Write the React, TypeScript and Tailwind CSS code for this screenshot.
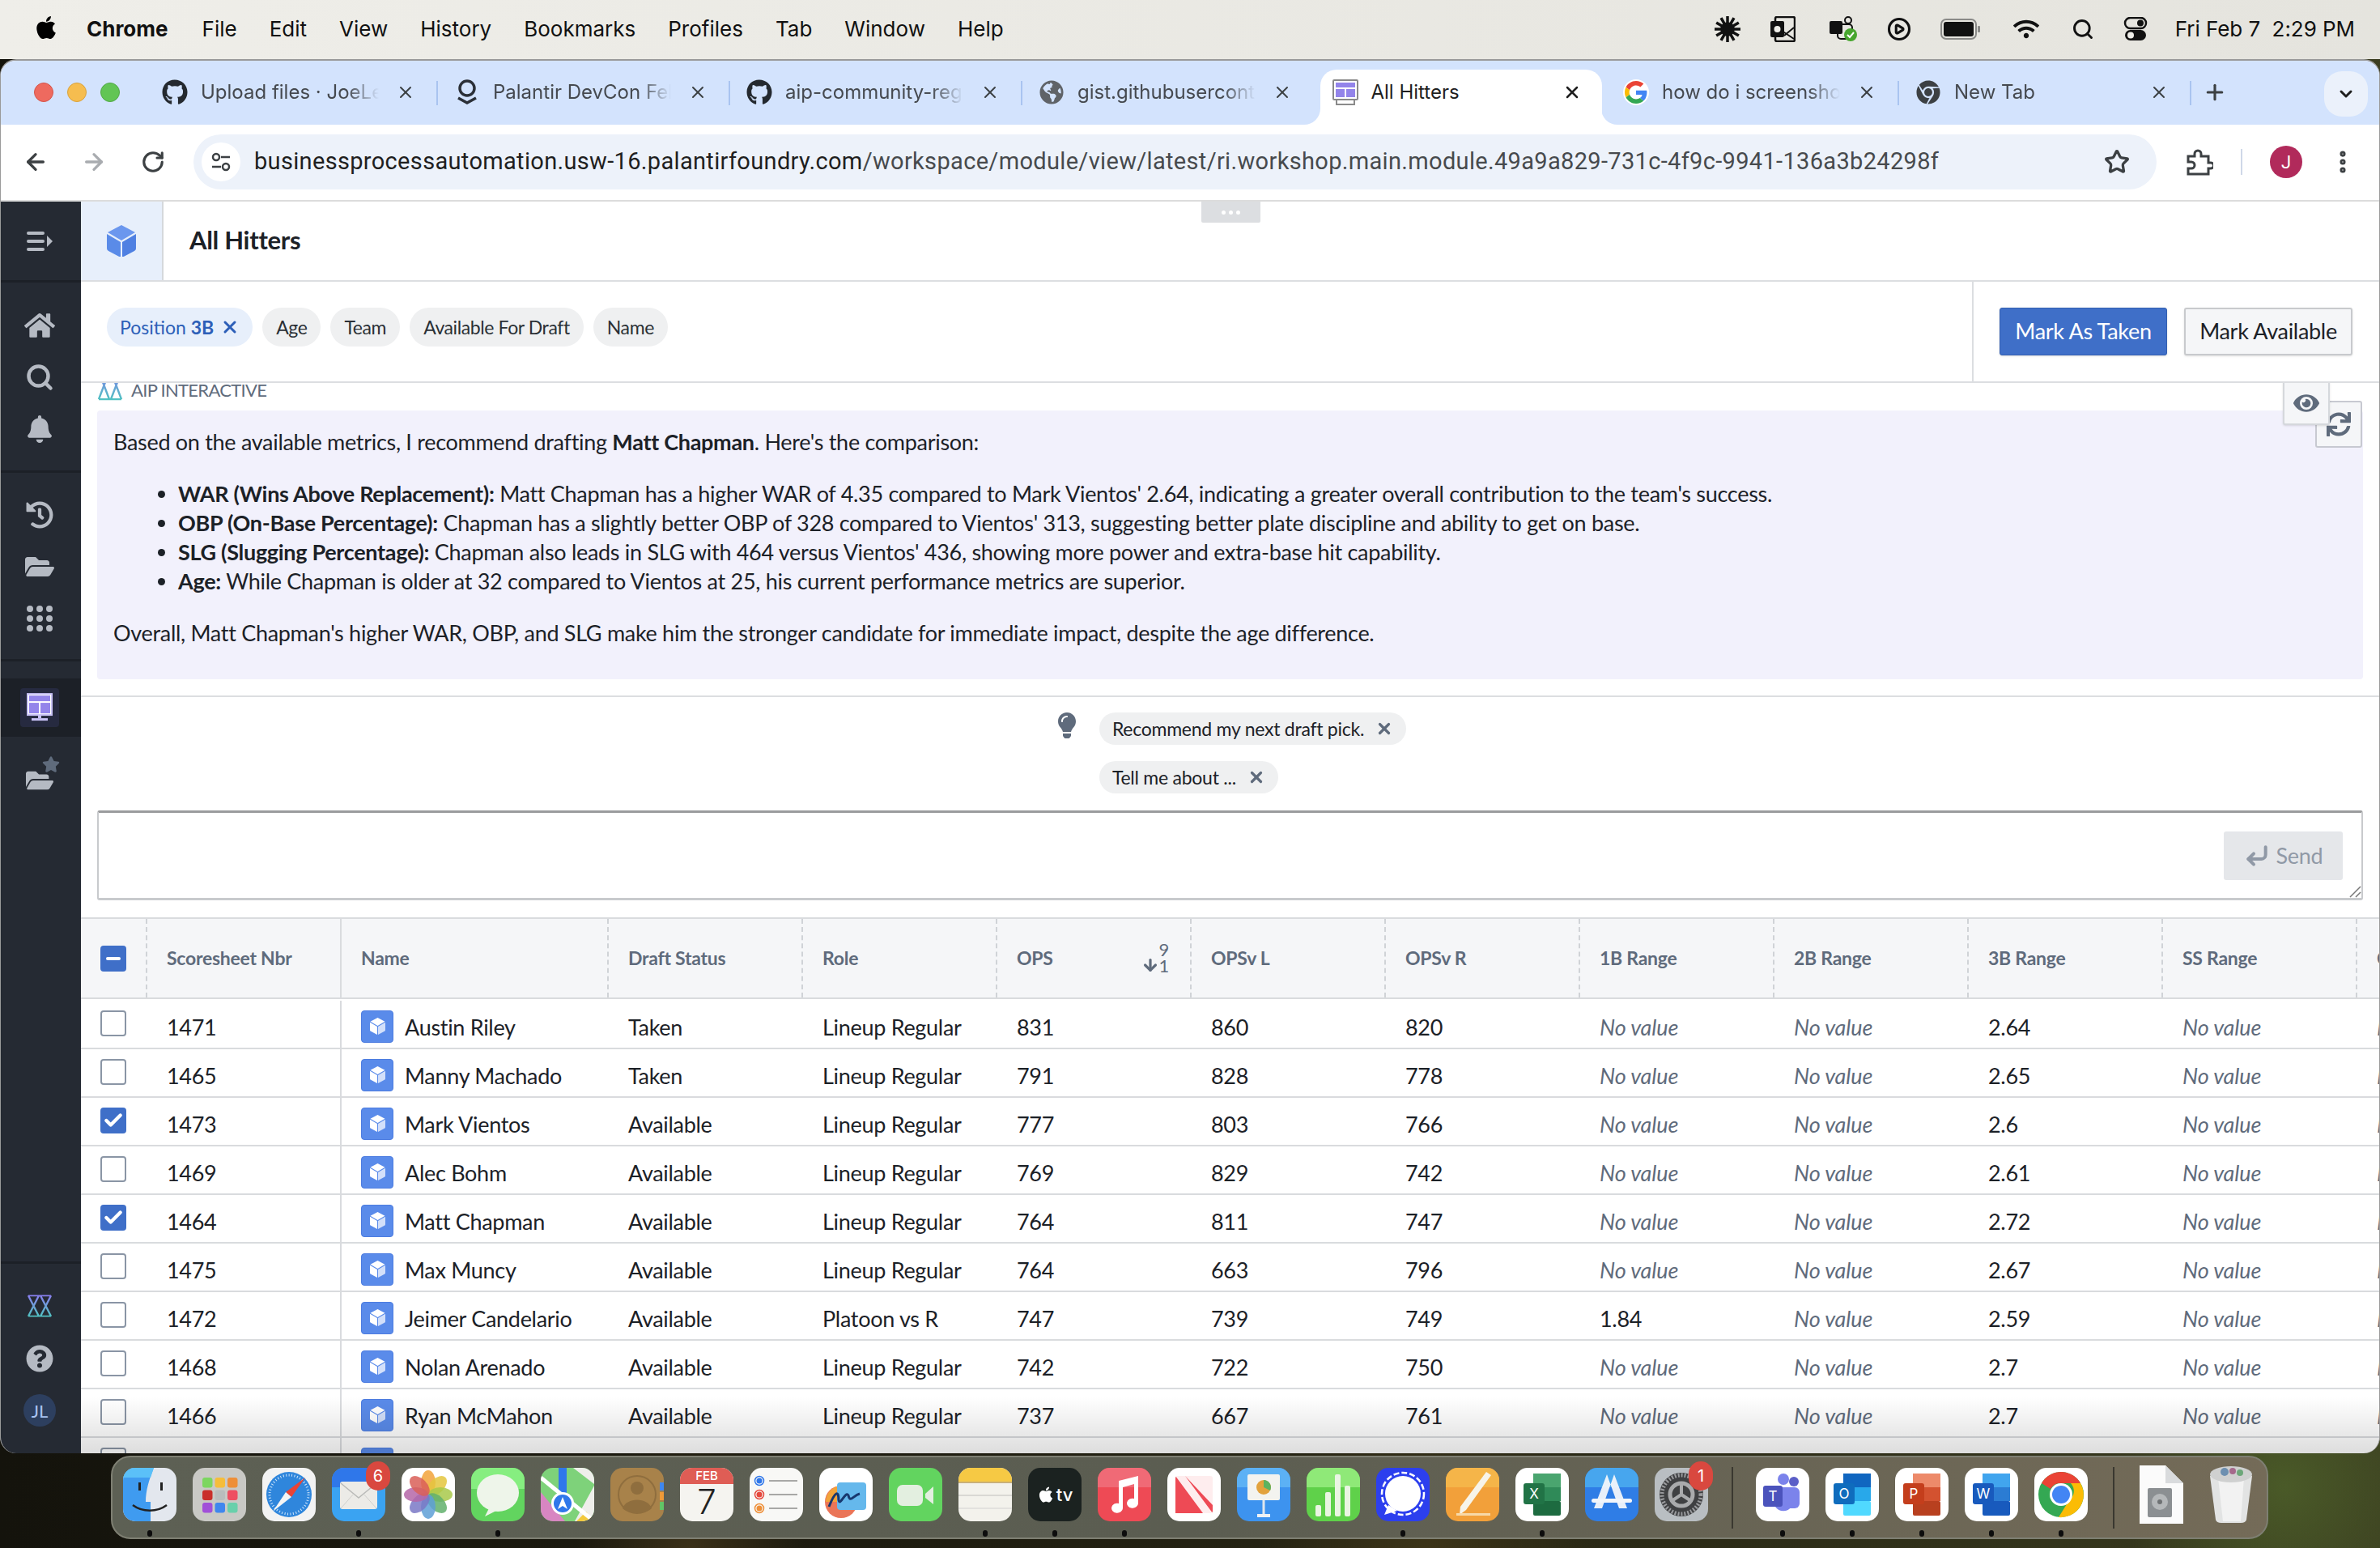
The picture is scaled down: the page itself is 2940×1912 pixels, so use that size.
import React from "react";
import { ArrowLeft, ArrowRight, RotateCw, Star, MoreVertical, X, Plus, ChevronDown, Search, CirclePlay, Check, Minus, CornerDownLeft, ArrowDown } from "lucide-react";
import { FaApple, FaGithub, FaHome, FaBell, FaHistory, FaFolderOpen, FaQuestionCircle, FaEye, FaSync, FaLightbulb, FaWifi, FaStar, FaChrome, FaGlobeAmericas } from "react-icons/fa";

const Cube = ({ s = 36, top = "#6b97ee", left = "#5a8be8", right = "#4f80e2" }: { s?: number; top?: string; left?: string; right?: string }) => (
  <svg width={s} height={s * 1.11} viewBox="0 0 36 40">
    <path d="M18 0 35 9 18 19 1 9Z" fill={top} />
    <path d="M0 11 17 21V40L2 32Q0 31 0 29Z" fill={left} />
    <path d="M36 11 19 21V40L34 32Q36 31 36 29Z" fill={right} />
  </svg>
);

const AipLogo = ({ w = 32, h = 28, id = "aipg" }: { w?: number; h?: number; id?: string }) => (
  <svg width={w} height={h} viewBox="0 0 32 42" fill="none" strokeWidth="2.500" preserveAspectRatio="none">
    <defs>
      <linearGradient id={id} gradientUnits="userSpaceOnUse" x1="0" y1="0" x2="0" y2="42">
        <stop offset="0" stopColor="#8b7cf0" />
        <stop offset="1" stopColor="#4fc4c0" />
      </linearGradient>
    </defs>
    <path d="M2 2H30M2 40H30M2 2 15 40M15 2 2 40M17 2 30 40M30 2 17 40" stroke={`url(#${id})`} />
  </svg>
);

const Bars = () => (
  <svg width="32" height="24" viewBox="0 0 32 24" fill="#b5bac3">
    <rect x="0" y="0" width="22" height="4" rx="2" />
    <rect x="0" y="10" width="22" height="4" rx="2" />
    <rect x="0" y="20" width="22" height="4" rx="2" />
    <path d="M25 5 32 12 25 19Z" />
  </svg>
);

const ModuleIcon = ({ w = 32 }: { w?: number }) => (
  <svg width={w} height={w * 1.1} viewBox="0 0 32 35">
    <rect x="1" y="1" width="30" height="26" fill="#fff" stroke="#c8c2f5" strokeWidth="2" />
    <rect x="3" y="3" width="26" height="7" fill="#9384ea" />
    <rect x="3" y="12" width="12" height="13" fill="#9384ea" />
    <rect x="17" y="12" width="12" height="13" fill="#9384ea" />
    <rect x="14" y="27" width="4" height="4" fill="#c8c2f5" />
    <rect x="6" y="31" width="20" height="3" fill="#c8c2f5" />
  </svg>
);

const ModuleFav = () => (
  <svg width="32" height="32" viewBox="0 0 32 32">
    <rect x="1" y="1" width="30" height="24" rx="1" fill="#fff" stroke="#8a8a8a" strokeWidth="2" />
    <rect x="4" y="4" width="24" height="6" fill="#9384ea" />
    <rect x="4" y="12" width="11" height="10" fill="#9384ea" />
    <rect x="17" y="12" width="11" height="10" fill="#9384ea" />
    <path d="M5 26V31H27V26" fill="none" stroke="#8a8a8a" strokeWidth="2" />
  </svg>
);

const GridDots = () => (
  <svg width="32" height="32" viewBox="0 0 32 32" fill="#b5bac3">
    {[4, 16, 28].flatMap((y) => [4, 16, 28].map((x) => <circle key={x + "-" + y} cx={x} cy={y} r="4" />))}
  </svg>
);

const GoogleG = () => (
  <svg width="28" height="28" viewBox="0 0 48 48">
    <path fill="#EA4335" d="M24 9.5c3.5 0 6.700 1.300 9.200 3.400l6.800-6.800C35.900 2.400 30.300 0 24 0 14.600 0 6.500 5.400 2.600 13.200l7.900 6.100C12.400 13.700 17.700 9.500 24 9.500z" />
    <path fill="#4285F4" d="M47 24.500c0-1.600-.1-3.100-.4-4.500H24v9h12.900c-.6 3-2.200 5.500-4.700 7.200l7.600 5.900C44.300 37.900 47 31.800 47 24.500z" />
    <path fill="#FBBC05" d="M10.500 28.700c-.5-1.400-.8-3-.8-4.700s.3-3.300.8-4.700l-7.900-6.100C.9 16.500 0 20.100 0 24s.9 7.500 2.600 10.800l7.900-6.100z" />
    <path fill="#34A853" d="M24 48c6.500 0 11.900-2.100 15.800-5.900l-7.600-5.900c-2.100 1.400-4.900 2.300-8.200 2.300-6.300 0-11.600-4.200-13.500-9.800l-7.900 6.100C6.500 42.600 14.600 48 24 48z" />
  </svg>
);

const PalantirFav = () => (
  <svg width="28" height="32" viewBox="0 0 28 32" fill="none" stroke="#2b3038" strokeWidth="3.500">
    <circle cx="14" cy="11" r="9" />
    <path d="M3 23 14 29 25 23" />
  </svg>
);

const Tab = ({ icon, text, sep = true }: { icon: React.ReactNode; text: string; sep?: boolean }) => (
  <div className="w-[361px] h-[56px] flex items-center pl-[20px] relative shrink-0">
    <div className="w-[32px] flex justify-center shrink-0">{icon}</div>
    <div className="ml-[16px] w-[220px] whitespace-nowrap overflow-hidden text-[#45494f] text-[24px] font-['Inter',sans-serif] [mask-image:linear-gradient(to_right,black_82%,transparent)]">{text}</div>
    <X size={24} className="ml-[21px] text-[#3c4043]" strokeWidth={2} />
    {sep && <div className="absolute right-0 top-[14px] w-[2px] h-[30px] bg-[#a9c4f0]" />}
  </div>
);

const Chip = ({ children }: { children: React.ReactNode }) => (
  <div className="h-[48px] px-[17px] flex items-center rounded-[24px] bg-[#eff0f1] text-[#2b3036] text-[23px] tracking-[-0.4px]">{children}</div>
);

const cols = ["w-[240px]", "w-[330px]", "w-[240px]", "w-[240px]", "w-[240px]", "w-[240px]", "w-[240px]", "w-[240px]", "w-[240px]", "w-[240px]", "w-[240px]", "w-[100px]"];
const heads = ["Scoresheet Nbr", "Name", "Draft Status", "Role", "OPS", "OPSv L", "OPSv R", "1B Range", "2B Range", "3B Range", "SS Range", "C Range"];

const NV = "No value";
const rows: { id: string; name: string; st: string; role: string; v: string[]; c: boolean }[] = [
  { id: "1471", name: "Austin Riley", st: "Taken", role: "Lineup Regular", v: ["831", "860", "820", NV, NV, "2.64", NV, NV], c: false },
  { id: "1465", name: "Manny Machado", st: "Taken", role: "Lineup Regular", v: ["791", "828", "778", NV, NV, "2.65", NV, NV], c: false },
  { id: "1473", name: "Mark Vientos", st: "Available", role: "Lineup Regular", v: ["777", "803", "766", NV, NV, "2.6", NV, NV], c: true },
  { id: "1469", name: "Alec Bohm", st: "Available", role: "Lineup Regular", v: ["769", "829", "742", NV, NV, "2.61", NV, NV], c: false },
  { id: "1464", name: "Matt Chapman", st: "Available", role: "Lineup Regular", v: ["764", "811", "747", NV, NV, "2.72", NV, NV], c: true },
  { id: "1475", name: "Max Muncy", st: "Available", role: "Lineup Regular", v: ["764", "663", "796", NV, NV, "2.67", NV, NV], c: false },
  { id: "1472", name: "Jeimer Candelario", st: "Available", role: "Platoon vs R", v: ["747", "739", "749", "1.84", NV, "2.59", NV, NV], c: false },
  { id: "1468", name: "Nolan Arenado", st: "Available", role: "Lineup Regular", v: ["742", "722", "750", NV, NV, "2.7", NV, NV], c: false },
  { id: "1466", name: "Ryan McMahon", st: "Available", role: "Lineup Regular", v: ["737", "667", "761", NV, NV, "2.7", NV, NV], c: false },
];

const Box = ({ checked }: { checked: boolean }) =>
  checked ? (
    <div className="w-[32px] h-[32px] rounded-[4px] bg-[#3f6fc8] flex items-center justify-center"><Check size={26} strokeWidth={4} className="text-white" /></div>
  ) : (
    <div className="w-[32px] h-[32px] rounded-[4px] bg-white border-[2px] border-[#8a95a5]" />
  );

const RowIcon = () => (
  <div className="w-[40px] h-[40px] rounded-[4px] bg-[#5a8bea] border border-[#4c7ce0] flex items-center justify-center shrink-0">
    <Cube s={19} top="#ffffff" left="#ffffff" right="#d3e0fa" />
  </div>
);

const Row = ({ r, first }: { r: (typeof rows)[number]; first: boolean }) => (
  <div className={first ? "flex h-[62px] pt-[2px] border-b-[2px] border-[#d9dbde] text-[27px] tracking-[-0.3px] leading-[36px] text-[#1c2127] shrink-0" : "flex h-[60px] border-b-[2px] border-[#d9dbde] text-[27px] tracking-[-0.3px] leading-[36px] text-[#1c2127] shrink-0"}>
    <div className="w-[82px] shrink-0 pl-[24px] pt-[12px]"><Box checked={r.c} /></div>
    <div className="w-[240px] shrink-0 pl-[24px] pt-[15px] border-r-[2px] border-[#d9dbde]">{r.id}</div>
    <div className="w-[330px] shrink-0 pl-[24px] flex items-start pt-[12px]"><RowIcon /><span className="ml-[14px] mt-[3px] whitespace-nowrap">{r.name}</span></div>
    <div className="w-[240px] shrink-0 pl-[24px] pt-[15px]">{r.st}</div>
    <div className="w-[240px] shrink-0 pl-[24px] pt-[15px]">{r.role}</div>
    {r.v.map((v, i) => (
      <div key={i} className={v === NV ? "w-[240px] shrink-0 pl-[24px] pt-[15px] italic tracking-[-0.1px] text-[#5f6b7c]" : "w-[240px] shrink-0 pl-[24px] pt-[15px]"}>{v}</div>
    ))}
  </div>
);

const Sq = ({ children, bg }: { children?: React.ReactNode; bg?: string }) => (
  <svg width="66" height="66" viewBox="0 0 66 66">
    <defs>
      <clipPath id="sq"><rect width="66" height="66" rx="15" /></clipPath>
    </defs>
    <g clipPath="url(#sq)">
      <rect width="66" height="66" fill={bg || "#fff"} />
      {children}
    </g>
  </svg>
);

const Finder = () => (
  <Sq bg="#e3e7ee">
    <path d="M0 0H38C32 15 28 28 28 42H34V66H0Z" fill="#3f9bf0" />
    <path d="M0 0H38L34 12H0Z" fill="#5bc0f8" />
    <rect x="19" y="18" width="3" height="10" fill="#222" />
    <rect x="46" y="18" width="3" height="10" fill="#222" />
    <path d="M12 46C24 55 42 55 54 46" stroke="#222" strokeWidth="2.500" fill="none" />
  </Sq>
);
const Launchpad = () => {
  const c = ["#7cd660", "#f5bd3a", "#ee8f38", "#c92f2a", "#b9bdbd", "#ee4f62", "#a150d8", "#3f87ee", "#69d0ab"];
  return (
    <Sq bg="#c9c9c5">
      {c.map((col, i) => (
        <rect key={i} x={12 + (i % 3) * 15.500} y={12 + Math.floor(i / 3) * 15.500} width="12.500" height="12.500" rx="3" fill={col} />
      ))}
    </Sq>
  );
};
const Safari = () => (
  <Sq bg="#f3f3f3">
    <circle cx="33" cy="33" r="28" fill="#2f86dc" />
    <circle cx="33" cy="33" r="24" fill="none" stroke="#cfe6fb" strokeWidth="3" strokeDasharray="1 2.500" />
    <path d="M53 12 29 30 36 36Z" fill="#ea4335" />
    <path d="M13 54 29 30 36 36Z" fill="#f5f5f5" />
  </Sq>
);
const Mail = () => (
  <Sq bg="#3aa3f2">
    <rect width="66" height="24" fill="#2f77ea" />
    <rect x="10" y="17" width="46" height="34" rx="3" fill="#ecebe7" />
    <path d="M11 19 33 37 55 19" fill="none" stroke="#b9bab8" strokeWidth="1.500" />
    <path d="M11 50 27 32M55 50 39 32" fill="none" stroke="#cfcfcc" strokeWidth="1" />
  </Sq>
);
const Photos = () => {
  const c = ["#f2a33a", "#e4c63e", "#a8c94a", "#62b06c", "#5e9fd6", "#7a78c6", "#b566a8", "#d95f58"];
  return (
    <Sq bg="#fff">
      {c.map((col, i) => (
        <ellipse key={i} cx="33" cy="18" rx="9" ry="15" fill={col} opacity=".85" transform={`rotate(${i * 45} 33 33)`} />
      ))}
    </Sq>
  );
};
const Messages = () => (
  <Sq bg="#62d45f">
    <rect width="66" height="26" fill="#86ee80" />
    <ellipse cx="33" cy="31" rx="26" ry="23" fill="#eef5ea" />
    <path d="M22 50 17 60 31 53Z" fill="#eef5ea" />
  </Sq>
);
const Maps = () => (
  <Sq bg="#7ed27a">
    <path d="M0 30 30 66H0Z" fill="#d886c2" />
    <path d="M40 0H66V20Z" fill="#eeeeea" />
    <path d="M22 0H32V40H22Z" fill="#2f77ea" />
    <path d="M66 22V66H42Z" fill="#eeeeea" />
    <path d="M44 66 56 54 66 66Z" fill="#f3c93c" />
    <path d="M0 12 66 66" stroke="#fff" strokeWidth="5" />
    <circle cx="27" cy="44" r="14" fill="#fff" />
    <circle cx="27" cy="44" r="11" fill="#2f77ea" />
    <path d="M27 36 33 51 27 47 21 51Z" fill="#fff" />
  </Sq>
);
const Contacts = () => (
  <Sq bg="#a8824a">
    <circle cx="33" cy="33" r="23" fill="none" stroke="#8f6e3e" strokeWidth="2" />
    <circle cx="33" cy="25" r="8" fill="#8f6e3e" />
    <path d="M15 50C20 36 46 36 51 50 42 58 24 58 15 50Z" fill="#8f6e3e" />
    <rect x="61" y="18" width="5" height="10" fill="#3f87ee" />
    <rect x="61" y="30" width="5" height="10" fill="#ee9a38" />
    <rect x="61" y="42" width="5" height="10" fill="#62c466" />
  </Sq>
);
const CalendarI = () => (
  <div className="relative w-[66px] h-[66px] rounded-[15px] bg-[#f5f4f0] overflow-hidden">
    <div className="h-[20px] bg-[#df5d55] text-white text-[15px] leading-[20px] text-center font-['Inter',sans-serif] font-medium">FEB</div>
    <div className="text-[42px] leading-[44px] text-center text-[#222] font-['Inter',sans-serif] font-light">7</div>
  </div>
);
const Reminders = () => (
  <Sq bg="#f8f8f6">
    {[{ y: 16, c: "#2f77ea" }, { y: 33, c: "#e5483d" }, { y: 50, c: "#ee8f38" }].map((o) => (
      <g key={o.y}>
        <circle cx="12" cy={o.y} r="5.500" fill="none" stroke={o.c} strokeWidth="1.500" />
        <circle cx="12" cy={o.y} r="3.500" fill={o.c} />
        <rect x="24" y={o.y - 1} width="35" height="2" fill="#a8a8a6" />
      </g>
    ))}
  </Sq>
);
const Freeform = () => (
  <Sq bg="#fff">
    <circle cx="27" cy="42" r="20" fill="#ea7558" />
    <path d="M8 42A20 20 0 0 1 27 22V42Z" fill="#f2a33a" />
    <rect x="22" y="18" width="36" height="34" rx="4" fill="#65b8ec" />
    <path d="M12 48C20 28 24 28 24 40 26 48 32 28 36 34 38 44 42 34 50 32" fill="none" stroke="#17376e" strokeWidth="3" />
  </Sq>
);
const Facetime = () => (
  <Sq bg="#62d45f">
    <rect x="10" y="21" width="32" height="26" rx="7" fill="#e3efe0" />
    <path d="M45 32 55 23V45L45 37Z" fill="#e3efe0" />
  </Sq>
);
const Notes = () => (
  <Sq bg="#f3f2ec">
    <rect width="66" height="17" fill="#f6c944" />
    <rect y="17" width="66" height="2" fill="#c9b078" />
    <rect y="33" width="66" height="2" fill="#d9d8d4" />
    <rect y="49" width="66" height="2" fill="#e3e2de" />
  </Sq>
);
const TV = () => (
  <div className="w-[66px] h-[66px] rounded-[15px] bg-[#1b2220] flex items-center justify-center text-white gap-[2px]">
    <FaApple size={22} />
    <span className="text-[22px] font-['Inter',sans-serif] font-medium leading-none">tv</span>
  </div>
);
const Music = () => (
  <Sq bg="#ee4a55">
    <rect width="66" height="24" fill="#f06a76" />
    <path d="M26 16 50 10V44A7 6 0 1 1 45 38V20L31 24V50A7 6 0 1 1 26 44Z" fill="#fff" />
  </Sq>
);
const News = () => (
  <Sq bg="#fff">
    <rect x="10" y="10" width="46" height="46" rx="3" fill="#ee4a55" />
    <path d="M10 10H22L56 56H44ZM22 10 56 46V10Z" fill="#fff" opacity="0.9" />
    <path d="M10 22 36 56H10Z" fill="#ee4a55" />
  </Sq>
);
const Keynote = () => (
  <Sq bg="#3d93ef">
    <rect width="66" height="24" fill="#5cb1f5" />
    <rect x="13" y="8" width="40" height="32" rx="2" fill="#f3f3ef" />
    <circle cx="33" cy="24" r="9" fill="#e2a23c" />
    <path d="M33 24V15A9 9 0 0 1 41 28Z" fill="#5bb35f" />
    <rect x="31.500" y="40" width="3" height="18" fill="#dfe7ee" />
    <rect x="25" y="57" width="16" height="4" fill="#eef2f5" />
  </Sq>
);
const Numbers = () => (
  <Sq bg="#5fd14a">
    <rect width="66" height="24" fill="#8fe978" />
    <rect x="11" y="46" width="7" height="14" rx="2" fill="#eaf5e3" />
    <rect x="23" y="30" width="7" height="30" rx="2" fill="#eaf5e3" />
    <rect x="35" y="8" width="7" height="52" rx="2" fill="#eaf5e3" />
    <rect x="47" y="22" width="7" height="38" rx="2" fill="#eaf5e3" />
  </Sq>
);
const Signal = () => (
  <Sq bg="#2c3fee">
    <ellipse cx="33" cy="32" rx="22" ry="22" fill="#fff" />
    <circle cx="33" cy="32" r="26" fill="none" stroke="#fff" strokeWidth="2.500" strokeDasharray="7 3" />
    <path d="M15 46 10 58 26 53Z" fill="#fff" />
  </Sq>
);
const Pages = () => (
  <Sq bg="#f2a03a">
    <rect width="66" height="24" fill="#f5b549" />
    <path d="M50 5 56 9 25 52 17 58 18 48Z" fill="#f7f4ea" />
    <rect x="13" y="56" width="42" height="3" fill="#f7d9a8" />
  </Sq>
);
const Office = ({ a, b, c, d, l }: { a: string; b: string; c: string; d: string; l: string }) => (
  <Sq bg="#fff">
    <rect x="22" y="7" width="34" height="17" fill={a} />
    <rect x="22" y="24" width="34" height="17" fill={b} />
    <rect x="22" y="41" width="34" height="18" rx="2" fill={c} />
    <rect x="10" y="19" width="26" height="26" rx="3" fill={d} />
    <text x="23" y="38" textAnchor="middle" fontSize="17" fill="#fff" fontFamily="Inter, sans-serif">{l}</text>
  </Sq>
);
const AppStore = () => (
  <Sq bg="#2f7de6">
    <rect width="66" height="24" fill="#47a6ee" />
    <path d="M36 8 27 8 42 50 52 50ZM27 8 36 8 21 50 11 50Z" fill="#f2f5fa" opacity=".95" />
    <rect x="8" y="38" width="50" height="5" rx="2.500" fill="#f2f5fa" />
  </Sq>
);
const SettingsI = () => (
  <Sq bg="#b9bec2">
    <circle cx="33" cy="33" r="27" fill="#3f4042" />
    <circle cx="33" cy="33" r="24" fill="none" stroke="#9a9b9e" strokeWidth="5" strokeDasharray="2 2" />
    <circle cx="33" cy="33" r="14" fill="none" stroke="#a9aaac" strokeWidth="5" />
    <path d="M33 19V33L21 41M33 33 45 41" stroke="#a9aaac" strokeWidth="4" fill="none" />
  </Sq>
);
const Teams = () => (
  <Sq bg="#fff">
    <circle cx="47" cy="17" r="6" fill="#5b5fc7" />
    <circle cx="34" cy="14" r="7" fill="#7b83eb" />
    <rect x="24" y="24" width="30" height="26" rx="6" fill="#7b83eb" />
    <path d="M24 24H44V48A12 12 0 0 1 24 48Z" fill="#7b83eb" />
    <rect x="9" y="22" width="24" height="26" rx="3" fill="#4b53bc" />
    <text x="21" y="41" textAnchor="middle" fontSize="17" fill="#fff" fontFamily="Inter, sans-serif">T</text>
  </Sq>
);
const Chrome = () => (
  <Sq bg="#fff">
    <circle cx="33" cy="33" r="28" fill="#34a853" />
    <path d="M33 5A28 28 0 0 1 57 19H33A14 14 0 0 0 20 26L9 19A28 28 0 0 1 33 5Z" fill="#ea4335" />
    <path d="M57 19A28 28 0 0 1 30 61L43 40A14 14 0 0 0 45 19Z" fill="#fbbc05" />
    <circle cx="33" cy="33" r="14" fill="#fff" />
    <circle cx="33" cy="33" r="11" fill="#4285f4" />
  </Sq>
);
const FileI = () => (
  <svg width="54" height="72" viewBox="0 0 54 72" className="-mt-[1px]">
    <path d="M0 0H32L54 22V72H0Z" fill="#fbfbfb" />
    <path d="M32 0 54 22H32Z" fill="#d9dbdd" />
    <rect x="10" y="28" width="30" height="36" rx="2" fill="#8b8f92" />
    <circle cx="25" cy="45" r="10" fill="#b5b8ba" />
    <circle cx="25" cy="45" r="3" fill="#6f7274" />
  </svg>
);
const Trash = () => (
  <svg width="56" height="74" viewBox="0 0 56 74">
    <path d="M2 14H54L47 68Q46 72 40 72H16Q10 72 9 68Z" fill="#e2e3e3" />
    <path d="M12 16 44 16 40 70H18Z" fill="#f2f2f2" />
    <ellipse cx="28" cy="12" rx="26" ry="10" fill="#cfd0d0" />
    <circle cx="20" cy="9" r="5" fill="#6d8fb0" />
    <circle cx="30" cy="8" r="4" fill="#a56a8c" />
    <circle cx="39" cy="10" r="4" fill="#6da77a" />
  </svg>
);

const dockA: { el: React.ReactNode; dot?: boolean; badge?: string }[] = [
  { el: <Finder />, dot: true },
  { el: <Launchpad /> },
  { el: <Safari /> },
  { el: <Mail />, dot: true, badge: "6" },
  { el: <Photos /> },
  { el: <Messages />, dot: true },
  { el: <Maps /> },
  { el: <Contacts /> },
  { el: <CalendarI /> },
  { el: <Reminders /> },
  { el: <Freeform /> },
  { el: <Facetime /> },
  { el: <Notes />, dot: true },
  { el: <TV />, dot: true },
  { el: <Music />, dot: true },
  { el: <News /> },
  { el: <Keynote /> },
  { el: <Numbers /> },
  { el: <Signal />, dot: true },
  { el: <Pages /> },
  { el: <Office a="#4aa56f" b="#2f8a58" c="#1d6b40" d="#217346" l="X" />, dot: true },
  { el: <AppStore /> },
  { el: <SettingsI />, badge: "1" },
];
const dockB = [
  <Teams />,
  <Office a="#1066c0" b="#28a8ea" c="#50d9ff" d="#0f6cbd" l="O" />,
  <Office a="#ed8a6a" b="#d35230" c="#b8401f" d="#c43e1c" l="P" />,
  <Office a="#41a5ee" b="#2b7cd3" c="#185abd" d="#185abd" l="W" />,
  <Chrome />,
];

const DockItem = ({ children, dot, badge }: { children: React.ReactNode; dot?: boolean; badge?: string }) => (
  <div className="w-[66px] flex flex-col items-center relative shrink-0">
    <div className="w-[66px] h-[66px] flex items-center justify-center">{children}</div>
    <div className={dot ? "mt-[11px] w-[6px] h-[8px] rounded-full bg-[#0d0d0d]" : "mt-[11px] w-[6px] h-[8px]"} />
    {badge && <div className="absolute -top-[8px] -right-[6px] w-[30px] h-[36px] rounded-full bg-[#d9483f] text-white text-[20px] flex items-center justify-center font-['Inter',sans-serif]">{badge}</div>}
  </div>
);

const SideBtn = ({ children }: { children: React.ReactNode }) => <div className="h-[64px] pr-[3px] flex items-center justify-center text-[#b5bac3]">{children}</div>;

export default function App() {
  return (
    <div className="w-[2940px] h-[1912px] overflow-hidden flex flex-col bg-[radial-gradient(circle_at_96%_96%,#4a5a28,transparent_6%),radial-gradient(circle_at_29%_100%,#3a3018,transparent_5%),radial-gradient(circle_at_60%_100%,#3c3418,transparent_8%),linear-gradient(90deg,#14130c,#1f1d10_40%,#2b2a16_70%,#3a3c20)] font-['Lato',sans-serif]">
      {/* Menu bar */}
      <div className="h-[73px] shrink-0 flex items-center bg-[linear-gradient(90deg,#efeee9,#e5e4de)] pl-[41px] pr-[31px] pb-[2px] text-[26px] text-[#111] font-['Inter',sans-serif]">
        <FaApple size={32} className="text-black -mt-[3px]" />
        <div className="ml-[34px] font-bold">Chrome</div>
        <div className="ml-[42px] flex gap-[40px]">
          {["File", "Edit", "View", "History", "Bookmarks", "Profiles", "Tab", "Window", "Help"].map((m) => (
            <span key={m}>{m}</span>
          ))}
        </div>
        <div className="ml-auto flex items-center">
          <svg width="32" height="32" viewBox="0 0 32 32" stroke="#111" strokeWidth="3.500" className="mr-[36px]">
            {[0, 30, 60, 90, 120, 150].map((a) => <line key={a} x1="16" y1="0" x2="16" y2="32" transform={`rotate(${a} 16 16)`} />)}
            <circle cx="16" cy="16" r="7" fill="#111" />
          </svg>
          <svg width="32" height="32" viewBox="0 0 32 32" className="mr-[42px]">
            <rect x="7" y="1" width="24" height="30" rx="2" fill="none" stroke="#111" strokeWidth="2.500" />
            <path d="M12 16 30 28M30 14 18 24" stroke="#111" strokeWidth="2" fill="none" />
            <rect x="1" y="6" width="17" height="20" rx="2" fill="#111" />
            <circle cx="9.500" cy="16" r="4" fill="#efeee9" />
          </svg>
          <svg width="36" height="32" viewBox="0 0 36 32" className="mr-[35px]">
            <circle cx="23" cy="5" r="4" fill="none" stroke="#111" strokeWidth="2" />
            <rect x="10" y="10" width="18" height="18" rx="4" fill="none" stroke="#111" strokeWidth="2" />
            <rect x="0" y="6" width="16" height="16" rx="2" fill="#111" />
            <circle cx="26" cy="23" r="8" fill="#47a62e" />
            <path d="M22 23 25 26 30 20" stroke="#fff" strokeWidth="2" fill="none" />
          </svg>
          <CirclePlay size={30} strokeWidth={2.5} className="mr-[36px]" />
          <svg width="50" height="26" viewBox="0 0 50 26" className="mr-[40px]">
            <rect x="1" y="1" width="43" height="24" rx="6" fill="none" stroke="#8a8a88" strokeWidth="2" />
            <rect x="4" y="4" width="37" height="18" rx="3" fill="#111" />
            <rect x="46" y="9" width="3" height="8" rx="1" fill="#8a8a88" />
          </svg>
          <FaWifi size={32} className="mr-[40px]" />
          <Search size={28} strokeWidth={2.5} className="mr-[36px]" />
          <svg width="30" height="30" viewBox="0 0 30 30" className="mr-[34px]">
            <rect x="2" y="1" width="26" height="13" rx="6.500" fill="none" stroke="#111" strokeWidth="2.500" />
            <circle cx="21" cy="7.500" r="4" fill="#111" />
            <rect x="2" y="16" width="26" height="13" rx="6.500" fill="#111" />
            <circle cx="9" cy="22.500" r="4" fill="#efeee9" />
          </svg>
          <span className="whitespace-pre tracking-[-0.05px]">Fri Feb 7  2:29 PM</span>
        </div>
      </div>

      {/* Browser window */}
      <div className="h-[1722px] w-[2940px] shrink-0 rounded-[20px] overflow-hidden border-t-[2px] border-x border-[#9a9a9a] flex flex-col bg-white relative">
        {/* Tab strip */}
        <div className="h-[79px] shrink-0 bg-[#d3e3fd] flex items-start pt-[11px] relative">
          <div className="absolute left-[41px] top-[27px] flex gap-[17px]">
            <div className="w-[24px] h-[24px] rounded-full bg-[#ee6a5f] border border-[#d5544a]" />
            <div className="w-[24px] h-[24px] rounded-full bg-[#f6bd4f] border border-[#d9a23d]" />
            <div className="w-[24px] h-[24px] rounded-full bg-[#62c555] border border-[#52a847]" />
          </div>
          <div className="ml-[179px] flex">
            <Tab icon={<FaGithub size={32} className="text-[#24292f]" />} text="Upload files · JoeLemon" />
            <Tab icon={<PalantirFav />} text="Palantir DevCon Feb" />
            <Tab icon={<FaGithub size={32} className="text-[#24292f]" />} text="aip-community-registry" />
            <Tab icon={<FaGlobeAmericas size={30} className="text-[#5f6368]" />} text="gist.githubusercontent" sep={false} />
            <div className="w-[361px] h-[68px] shrink-0 flex items-start justify-center relative">
              <div className="w-[348px] h-[68px] rounded-t-[20px] bg-white flex items-center pl-[15px] pb-[12px]">
                <ModuleFav />
                <div className="ml-[16px] text-[24px] text-[#1f1f1f] font-['Inter',sans-serif] w-[236px]">All Hitters</div>
                <X size={24} className="text-[#1f1f1f]" strokeWidth={2.500} />
              </div>
              <svg width="20" height="20" viewBox="0 0 20 20" className="absolute bottom-0 -left-[13px]"><path d="M20 0V20H0A20 20 0 0 0 20 0Z" fill="#fff" /></svg>
              <svg width="20" height="20" viewBox="0 0 20 20" className="absolute bottom-0 -right-[13px]"><path d="M0 0V20H20A20 20 0 0 1 0 0Z" fill="#fff" /></svg>
            </div>
            <Tab icon={<div className="w-[32px] h-[32px] rounded-full bg-white flex items-center justify-center"><GoogleG /></div>} text="how do i screenshot" />
            <Tab icon={<FaChrome size={30} className="text-[#3c4043]" />} text="New Tab" />
            <div className="ml-[14px] h-[56px] flex items-center"><Plus size={30} className="text-[#3c4043]" strokeWidth={2.500} /></div>
          </div>
          <div className="absolute right-[14px] top-[13px] w-[54px] h-[56px] rounded-[22px] bg-[#ebf1fb] flex items-center justify-center">
            <ChevronDown size={24} strokeWidth={3} className="text-[#1f1f1f]" />
          </div>
        </div>

        {/* Toolbar */}
        <div className="h-[95px] shrink-0 flex items-center bg-white border-b-[2px] border-[#dcdcdc] pb-[1px]">
          <ArrowLeft size={32} className="ml-[27px] text-[#3c4043]" strokeWidth={2.500} />
          <ArrowRight size={32} className="ml-[40px] text-[#a9acb0]" strokeWidth={2.500} />
          <RotateCw size={30} className="ml-[42px] text-[#3c4043]" strokeWidth={2.500} />
          <div className="ml-[35px] w-[2425px] h-[68px] rounded-[34px] bg-[#edf2fa] flex items-center pl-[10px] relative">
            <div className="w-[48px] h-[48px] rounded-full bg-white flex items-center justify-center">
              <svg width="26" height="26" viewBox="0 0 26 26" fill="none" stroke="#3c4043" strokeWidth="2.500">
                <circle cx="7" cy="7" r="4" />
                <path d="M13 7H24M2 19H13" />
                <circle cx="19" cy="19" r="4" />
              </svg>
            </div>
            <div className="ml-[17px] text-[29px] tracking-[0.33px] whitespace-nowrap font-['Roboto',sans-serif] text-[#1f1f1f]">businessprocessautomation.usw-16.palantirfoundry.com<span className="text-[#474a4d]">/workspace/module/view/latest/ri.workshop.main.module.49a9a829-731c-4f9c-9941-136a3b24298f</span></div>
            <Star size={32} strokeWidth={2.500} className="absolute right-[33px] text-[#3c4043]" />
          </div>
          <svg width="34" height="34" viewBox="0 0 34 34" fill="none" stroke="#3c4043" strokeWidth="3" className="ml-[36px]">
            <path d="M3 10H11V7A4 4 0 0 1 19 7V10H28V18H31A3 3 0 0 1 31 25H28V32H3V25H7A4 4 0 0 0 7 17H3Z" />
          </svg>
          <div className="ml-[34px] w-[2px] h-[32px] bg-[#cfd8e8]" />
          <div className="ml-[34px] w-[40px] h-[40px] rounded-full bg-[#b12a5b] text-white text-[22px] flex items-center justify-center font-['Roboto',sans-serif]">J</div>
          <MoreVertical size={34} strokeWidth={3} className="ml-[33px] text-[#3c4043]" />
        </div>

        {/* App */}
        <div className="flex-1 flex min-h-0 relative">
          {/* Sidebar */}
          <div className="w-[99px] shrink-0 bg-[#252a33] flex flex-col">
            <div className="h-[100px] flex items-center justify-center border-b-[3px] border-[#1c2027] pr-[3px]"><Bars /></div>
            <div className="h-[235px] pt-[21px] border-b-[3px] border-[#1c2027]">
              <SideBtn><FaHome size={38} /></SideBtn>
              <SideBtn><Search size={36} strokeWidth={3} /></SideBtn>
              <SideBtn><FaBell size={34} /></SideBtn>
            </div>
            <div className="h-[233px] pt-[20px] border-b-[3px] border-[#1c2027]">
              <SideBtn><FaHistory size={34} /></SideBtn>
              <SideBtn><FaFolderOpen size={36} /></SideBtn>
              <SideBtn><GridDots /></SideBtn>
            </div>
            <div className="h-[744px] border-b-[3px] border-[#1c2027] pt-[21px]">
              <div className="h-[72px] pr-[3px] flex items-center justify-center bg-[#1c2027]">
                <div className="w-[48px] h-[48px] rounded-[4px] bg-[#262a40] flex items-center justify-center"><ModuleIcon w={32} /></div>
              </div>
              <div className="relative h-[64px] mt-[17px] pr-[3px] flex items-center justify-center text-[#b5bac3]">
                <FaFolderOpen size={34} className="mt-[10px]" />
                <FaStar size={22} className="absolute left-[51px] top-[6px] text-[#5f6b7c]" />
              </div>
            </div>
            <div className="flex flex-col items-center pt-[38px] pr-[3px]">
              <AipLogo w={32} h={28} id="aipside" />
              <div className="h-[64px] flex items-center justify-center text-[#b5bac3] mt-[19px]"><FaQuestionCircle size={34} /></div>
              <div className="w-[40px] h-[40px] rounded-full bg-[#2d3f5f] text-[#a9c4f2] text-[22px] flex items-center justify-center mt-[12px]">JL</div>
            </div>
          </div>

          {/* Main */}
          <div className="flex-1 min-w-0 flex flex-col relative overflow-hidden">
            <div className="absolute left-[1384px] top-0 w-[73px] h-[26px] bg-[#dcdee1] rounded-b-[2px] flex items-center justify-center gap-[4px] z-10">
              <div className="w-[5px] h-[5px] rounded-full bg-white" />
              <div className="w-[5px] h-[5px] rounded-full bg-white" />
              <div className="w-[5px] h-[5px] rounded-full bg-white" />
            </div>

            {/* Header */}
            <div className="h-[99px] shrink-0 flex border-b-[2px] border-[#dcdee1]">
              <div className="w-[102px] bg-[#e7effb] border-r-[2px] border-[#d5d8dc] flex items-center justify-center"><Cube s={36} /></div>
              <div className="ml-[32px] pb-[2px] flex items-center text-[31px] tracking-[-0.3px] font-bold text-[#1c2127]">All Hitters</div>
            </div>

            {/* Filter bar */}
            <div className="h-[125px] shrink-0 flex border-b-[2px] border-[#dcdee1]">
              <div className="flex-1 pl-[32px] pt-[32px] flex items-start gap-[12px]">
                <div className="h-[48px] px-[16px] flex items-center rounded-[24px] bg-[#e7effb] text-[#2d5fb8] text-[23px]">
                  Position&nbsp;<b className="font-bold">3B</b>
                  <X size={24} strokeWidth={3} className="ml-[8px] text-[#2d5fb8]" />
                </div>
                <Chip>Age</Chip>
                <Chip>Team</Chip>
                <Chip>Available For Draft</Chip>
                <Chip>Name</Chip>
              </div>
              <div className="w-[503px] shrink-0 border-l-[2px] border-[#dcdee1] pl-[32px] pt-[32px] flex items-start gap-[21px]">
                <button className="w-[207px] h-[59px] rounded-[3px] bg-[#3f6fc8] border border-[#335fb0] text-white text-[27px] tracking-[-0.3px] shadow-sm">Mark As Taken</button>
                <button className="w-[208px] h-[59px] rounded-[3px] bg-[#f5f6f8] border-[2px] border-[#c8cacd] text-[#1c2127] text-[27px] tracking-[-0.3px] shadow-sm">Mark Available</button>
              </div>
            </div>

            {/* AIP panel */}
            <div className="h-[388px] shrink-0 relative border-b-[2px] border-[#dcdee1] overflow-hidden px-[20px]">
              <div className="h-[34px] flex items-start text-[22px] leading-[18px] tracking-[-0.7px] text-[#5f6b7c] whitespace-nowrap">
                <div className="-mt-[16px] mr-[10px]"><AipLogo w={32} h={38} id="aiplabel" /></div>
                AIP INTERACTIVE
              </div>
              <div className="h-[332px] rounded-[4px] bg-[#f2f1fc] pl-[20px] pt-[21px] text-[27px] tracking-[-0.3px] leading-[36px] text-[#1c2127]">
                <p>Based on the available metrics, I recommend drafting <b className="font-bold">Matt Chapman</b>. Here's the comparison:</p>
                <ul className="list-disc pl-[80px] my-[28px]">
                  <li><b className="font-bold">WAR (Wins Above Replacement):</b> Matt Chapman has a higher WAR of 4.35 compared to Mark Vientos' 2.64, indicating a greater overall contribution to the team's success.</li>
                  <li><b className="font-bold">OBP (On-Base Percentage):</b> Chapman has a slightly better OBP of 328 compared to Vientos' 313, suggesting better plate discipline and ability to get on base.</li>
                  <li><b className="font-bold">SLG (Slugging Percentage):</b> Chapman also leads in SLG with 464 versus Vientos' 436, showing more power and extra-base hit capability.</li>
                  <li><b className="font-bold">Age:</b> While Chapman is older at 32 compared to Vientos at 25, his current performance metrics are superior.</li>
                </ul>
                <p>Overall, Matt Chapman's higher WAR, OBP, and SLG make him the stronger candidate for immediate impact, despite the age difference.</p>
              </div>
              <div className="absolute right-[21px] top-[22px] w-[58px] h-[58px] rounded-[3px] border-[2px] border-[#c7c9d1] bg-[#f5f6f8] flex items-center justify-center"><FaSync size={30} className="text-[#5f6b7c]" /></div>
              <div className="absolute right-[61px] -top-[2px] w-[58px] h-[54px] rounded-b-[3px] border-[2px] border-[#d5d8dc] bg-[#f5f6f8] shadow-sm flex items-center justify-center"><FaEye size={32} className="text-[#5f6b7c]" /></div>
            </div>

            {/* Suggestions */}
            <div className="h-[140px] shrink-0 flex justify-center pt-[19px]">
              <FaLightbulb size={32} className="text-[#5f6b7c] mr-[24px]" />
              <div className="flex flex-col items-start gap-[20px]">
                <div className="h-[40px] px-[16px] rounded-[20px] bg-[#eff0f1] flex items-center text-[23px] tracking-[-0.25px] text-[#1c2127]">Recommend my next draft pick.<X size={22} strokeWidth={3.500} className="ml-[14px] text-[#5f6b7c]" /></div>
                <div className="h-[40px] px-[16px] rounded-[20px] bg-[#eff0f1] flex items-center text-[23px] tracking-[-0.25px] text-[#1c2127]">Tell me about ...<X size={22} strokeWidth={3.500} className="ml-[14px] text-[#5f6b7c]" /></div>
              </div>
            </div>

            {/* Input */}
            <div className="h-[111px] mx-[20px] shrink-0 rounded-[3px] border-x-[2px] border-b-[3px] border-t-[3px] border-x-[#c8cacd] border-b-[#c8cacd] border-t-[#9a9b9d] relative flex justify-end pt-[23px] pr-[23px]">
              <div className="w-[147px] h-[60px] rounded-[3px] bg-[#e5e7ea] flex items-center justify-center text-[#9099a6] text-[27px] tracking-[-0.3px]"><CornerDownLeft size={32} strokeWidth={3} className="mr-[8px]" />Send</div>
              <svg width="16" height="16" viewBox="0 0 16 16" stroke="#777" strokeWidth="1.500" className="absolute right-0 bottom-0"><path d="M15 2 2 15M15 9 9 15" /></svg>
            </div>

            {/* Table */}
            <div className="mt-[21px] flex-1 min-h-0 overflow-hidden relative border-t-[2px] border-[#d9dbde]">
              <div className="flex h-[99px] bg-[#f5f6f8] border-b-[2px] border-[#d9dbde] text-[23px] tracking-[-0.25px] font-bold text-[#5f6b7c] w-[2900px]">
                <div className="w-[82px] shrink-0 pl-[24px] flex items-center border-r-[2px] border-dashed border-[#d0d3d7]">
                  <div className="w-[32px] h-[32px] rounded-[4px] bg-[#3f6fc8] flex items-center justify-center"><Minus size={24} strokeWidth={4} className="text-white" /></div>
                </div>
                {heads.map((h, i) => (
                  <div key={h} className={cols[i] + (i === 0 ? " border-r-[2px] border-[#d9dbde]" : " border-r-[2px] border-dashed border-[#d0d3d7]") + " shrink-0 pl-[24px] flex items-center whitespace-nowrap relative"}>
                    {h}
                    {h === "OPS" && (
                      <div className="absolute right-[26px] top-[28px] flex items-end text-[22px] leading-[20px] font-normal">
                        <ArrowDown size={22} strokeWidth={3.500} />
                        <div className="flex flex-col items-center -ml-[1px]"><span>9</span><span>1</span></div>
                      </div>
                    )}
                  </div>
                ))}
              </div>
              <div className="flex flex-col w-[2900px]">
                {rows.map((r, i) => <Row key={r.id} r={r} first={i === 0} />)}
                <div className="flex h-[60px] text-[28px]">
                  <div className="w-[82px] shrink-0 pl-[24px] pt-[12px]"><Box checked={false} /></div>
                  <div className="w-[240px] shrink-0 border-r-[2px] border-[#d9dbde]" />
                  <div className="w-[330px] shrink-0 pl-[24px] pt-[12px]"><RowIcon /></div>
                </div>
              </div>
              <div className="absolute left-0 right-0 bottom-0 h-[70px] bg-gradient-to-b from-transparent to-[#00000022] pointer-events-none" />
            </div>
          </div>
        </div>
      </div>

      {/* Dock */}
      <div className="mt-[3px] ml-[137px] w-[2665px] h-[103px] shrink-0 rounded-[24px] bg-[linear-gradient(90deg,#5d6054,#5b5d51_50%,#746b58)] border-[2px] border-[#7e7f72] flex items-start pl-[13px] pt-[13px]">
        <div className="flex gap-[20px]">
          {dockA.map((d, i) => <DockItem key={i} dot={d.dot} badge={d.badge}>{d.el}</DockItem>)}
        </div>
        <div className="ml-[29px] mr-[28px] w-[2px] h-[76px] -mt-[1px] bg-[#3a3830]" />
        <div className="flex gap-[20px]">
          {dockB.map((d, i) => <DockItem key={i} dot>{d}</DockItem>)}
        </div>
        <div className="ml-[31px] mr-[25px] w-[2px] h-[76px] -mt-[1px] bg-[#3a3830]" />
        <div className="flex gap-[20px]">
          <DockItem><FileI /></DockItem>
          <DockItem><Trash /></DockItem>
        </div>
      </div>
    </div>
  );
}
